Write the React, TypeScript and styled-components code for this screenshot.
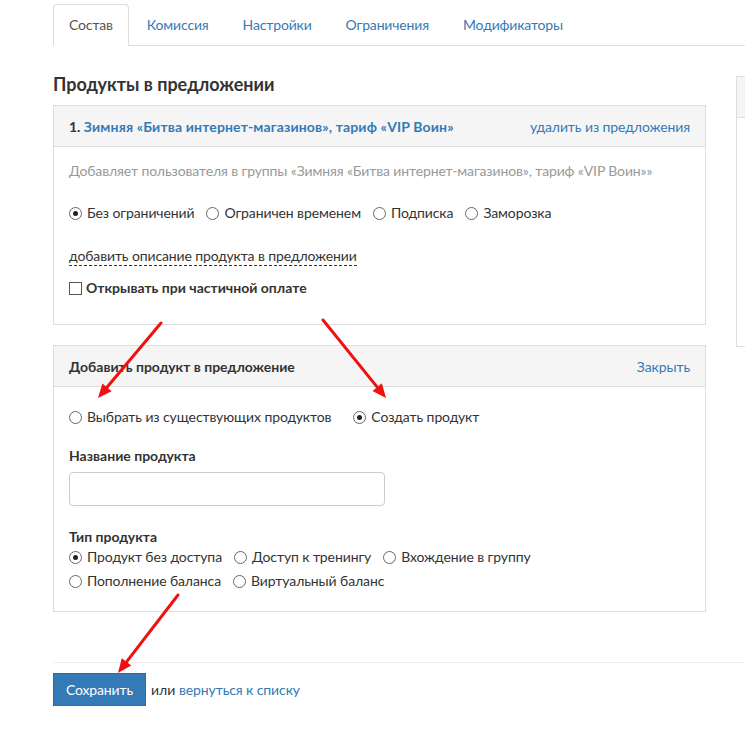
import * as React from 'react'
import styled, { createGlobalStyle } from 'styled-components'

const GlobalStyle = createGlobalStyle`
  html, body {
    margin: 0;
    padding: 0;
    overflow: hidden;
    background: #fff;
  }
  body {
    font-family: Lato, "Open Sans", "Liberation Sans", sans-serif;
    font-size: 14px;
    color: #333;
  }
`

const Page = styled.div`
  position: relative;
  width: 745px;
  height: 755px;
  overflow: hidden;
`

const Container = styled.div`
  margin-left: 53px;
  padding-top: 4px;
  width: 1000px;
`

const Tabs = styled.div`
  display: flex;
  border-bottom: 1px solid #ddd;
`

const Tab = styled.div<{ active?: boolean }>`
  height: 40px;
  line-height: 40px;
  padding: 0 15px;
  margin-right: 2px;
  margin-bottom: -1px;
  border: 1px solid ${p => (p.active ? '#ddd' : 'transparent')};
  border-bottom-color: ${p => (p.active ? '#fff' : 'transparent')};
  border-radius: 4px 4px 0 0;
  background: ${p => (p.active ? '#fff' : 'transparent')};
  color: ${p => (p.active ? '#555' : '#337ab7')};
  letter-spacing: -0.15px;
`

const Row = styled.div`
  display: flex;
  gap: 30px;
`

const Main = styled.div`
  width: 653px;
  flex-shrink: 0;
`

const Side = styled.div`
  margin-top: 30px;
  width: 260px;
  height: 269px;
  border: 1px solid #ddd;
  border-right: none;
`

const SideHeader = styled.div`
  height: 40px;
  background: #f5f5f5;
  border-bottom: 1px solid #ddd;
`

const Heading = styled.h3`
  margin: 26px 0 9px;
  font-size: 18px;
  line-height: 24px;
  font-weight: 700;
  color: #333;
`

const Panel = styled.div`
  border: 1px solid #ddd;
  margin-bottom: 20px;
`

const PanelHeader = styled.div`
  display: flex;
  align-items: center;
  justify-content: space-between;
  height: 40px;
  padding: 0 15px;
  background: #f5f5f5;
  border-bottom: 1px solid #ddd;
`

const PanelTitle = styled.div`
  font-weight: 700;
  color: #333;
`

const Link = styled.a<{ bold?: boolean }>`
  color: #337ab7;
  text-decoration: none;
  font-weight: ${p => (p.bold ? 700 : 400)};
  letter-spacing: ${p => (p.bold ? '0.15px' : '-0.1px')};
  cursor: pointer;
`

const PanelBody = styled.div<{ pt: number; pb: number }>`
  padding: ${p => p.pt}px 15px ${p => p.pb}px;
`

const Line = styled.div<{ mt?: number }>`
  line-height: 20px;
  margin-top: ${p => p.mt || 0}px;
`

const Muted = styled(Line)`
  color: #999;
  letter-spacing: -0.12px;
`

const Options = styled.div<{ mt?: number; gap?: number }>`
  display: flex;
  flex-wrap: wrap;
  column-gap: ${p => p.gap || 12}px;
  margin-top: ${p => p.mt || 0}px;
  line-height: 20px;
`

const OptionLabel = styled.label`
  display: inline-flex;
  align-items: center;
  gap: 5px;
  color: #333;
  letter-spacing: -0.1px;
`

const Circle = styled.span<{ checked?: boolean }>`
  position: relative;
  width: 13px;
  height: 13px;
  border: 1px solid #666;
  border-radius: 50%;
  background: #fff;
  box-sizing: border-box;

  &::after {
    content: '';
    display: ${p => (p.checked ? 'block' : 'none')};
    position: absolute;
    left: 3px;
    top: 3px;
    width: 5px;
    height: 5px;
    border-radius: 50%;
    background: #222;
  }
`

const DashedLink = styled.span`
  display: inline-block;
  line-height: 18px;
  color: #333;
  letter-spacing: -0.12px;
  border-bottom: 1px dashed #333;
`

const CheckRow = styled.label`
  display: flex;
  align-items: center;
  gap: 4px;
  line-height: 20px;
  margin-top: 12px;
  font-weight: 700;
`

const Box = styled.span`
  width: 13px;
  height: 13px;
  border: 1px solid #555;
  box-sizing: border-box;
  background: #fff;
`

const FieldLabel = styled.div<{ mt?: number }>`
  font-weight: 700;
  line-height: 20px;
  margin-top: ${p => p.mt || 0}px;
`

const Input = styled.input`
  display: block;
  box-sizing: border-box;
  width: 316px;
  height: 34px;
  margin-top: 6px;
  border: 1px solid #ccc;
  border-radius: 4px;
  outline: none;
  font: inherit;
  padding: 6px 12px;
`

const Footer = styled.div`
  margin-top: 30px;
  border-top: 1px solid #eee;
  padding-top: 10px;
  display: flex;
  align-items: center;
  gap: 5px;
`

const SaveButton = styled.button`
  height: 33px;
  padding: 0 12px;
  background: #337ab7;
  border: 1px solid #2e6da4;
  color: #fff;
  font: inherit;
  font-size: 14px;
  letter-spacing: -0.15px;
  cursor: pointer;
`

const Arrows = styled.svg`
  position: absolute;
  left: 0;
  top: 0;
  pointer-events: none;
`

type RadioProps = { label: string; checked?: boolean }

function Radio({ label, checked }: RadioProps) {
  return (
    <OptionLabel>
      <Circle checked={checked} />
      {label}
    </OptionLabel>
  )
}

const arrows = [
  { x1: 161, y1: 323, x2: 98, y2: 398 },
  { x1: 323, y1: 320, x2: 386, y2: 398 },
  { x1: 178, y1: 595, x2: 118, y2: 673 },
]

function Arrow({ x1, y1, x2, y2 }: { x1: number; y1: number; x2: number; y2: number }) {
  const a = Math.atan2(y2 - y1, x2 - x1)
  const len = 14
  const w = 6
  const bx = x2 - len * Math.cos(a)
  const by = y2 - len * Math.sin(a)
  const px = -Math.sin(a) * w
  const py = Math.cos(a) * w
  return (
    <g>
      <line x1={x1} y1={y1} x2={bx} y2={by} stroke="#f01010" strokeWidth={3} strokeLinecap="round" />
      <polygon points={`${x2},${y2} ${bx + px},${by + py} ${bx - px},${by - py}`} fill="#f01010" />
    </g>
  )
}

export default function App() {
  return (
    <Page>
      <GlobalStyle />
      <Container>
        <Tabs>
          <Tab active>Состав</Tab>
          <Tab>Комиссия</Tab>
          <Tab>Настройки</Tab>
          <Tab>Ограничения</Tab>
          <Tab>Модификаторы</Tab>
        </Tabs>
        <Row>
          <Main>
            <Heading>Продукты в предложении</Heading>
            <Panel>
              <PanelHeader>
                <PanelTitle>
                  1. <Link bold>Зимняя «Битва интернет-магазинов», тариф «VIP Воин»</Link>
                </PanelTitle>
                <Link>удалить из предложения</Link>
              </PanelHeader>
              <PanelBody pt={14} pb={26}>
                <Muted>Добавляет пользователя в группы «Зимняя «Битва интернет-магазинов», тариф «VIP Воин»»</Muted>
                <Options mt={22}>
                  <Radio label="Без ограничений" checked />
                  <Radio label="Ограничен временем" />
                  <Radio label="Подписка" />
                  <Radio label="Заморозка" />
                </Options>
                <Line mt={23}>
                  <DashedLink>добавить описание продукта в предложении</DashedLink>
                </Line>
                <CheckRow>
                  <Box />
                  Открывать при частичной оплате
                </CheckRow>
              </PanelBody>
            </Panel>
            <Panel>
              <PanelHeader>
                <PanelTitle>Добавить продукт в предложение</PanelTitle>
                <Link>Закрыть</Link>
              </PanelHeader>
              <PanelBody pt={20} pb={20}>
                <Options gap={22}>
                  <Radio label="Выбрать из существующих продуктов" />
                  <Radio label="Создать продукт" checked />
                </Options>
                <FieldLabel mt={19}>Название продукта</FieldLabel>
                <Input />
                <FieldLabel mt={21}>Тип продукта</FieldLabel>
                <Options gap={12}>
                  <Radio label="Продукт без доступа" checked />
                  <Radio label="Доступ к тренингу" />
                  <Radio label="Вхождение в группу" />
                </Options>
                <Options mt={4} gap={12}>
                  <Radio label="Пополнение баланса" />
                  <Radio label="Виртуальный баланс" />
                </Options>
              </PanelBody>
            </Panel>
          </Main>
          <Side>
            <SideHeader />
          </Side>
        </Row>
        <Footer>
          <SaveButton>Сохранить</SaveButton>
          <span>
            или <Link>вернуться к списку</Link>
          </span>
        </Footer>
      </Container>
      <Arrows width={745} height={755}>
        {arrows.map((a, i) => (
          <Arrow key={i} {...a} />
        ))}
      </Arrows>
    </Page>
  )
}
